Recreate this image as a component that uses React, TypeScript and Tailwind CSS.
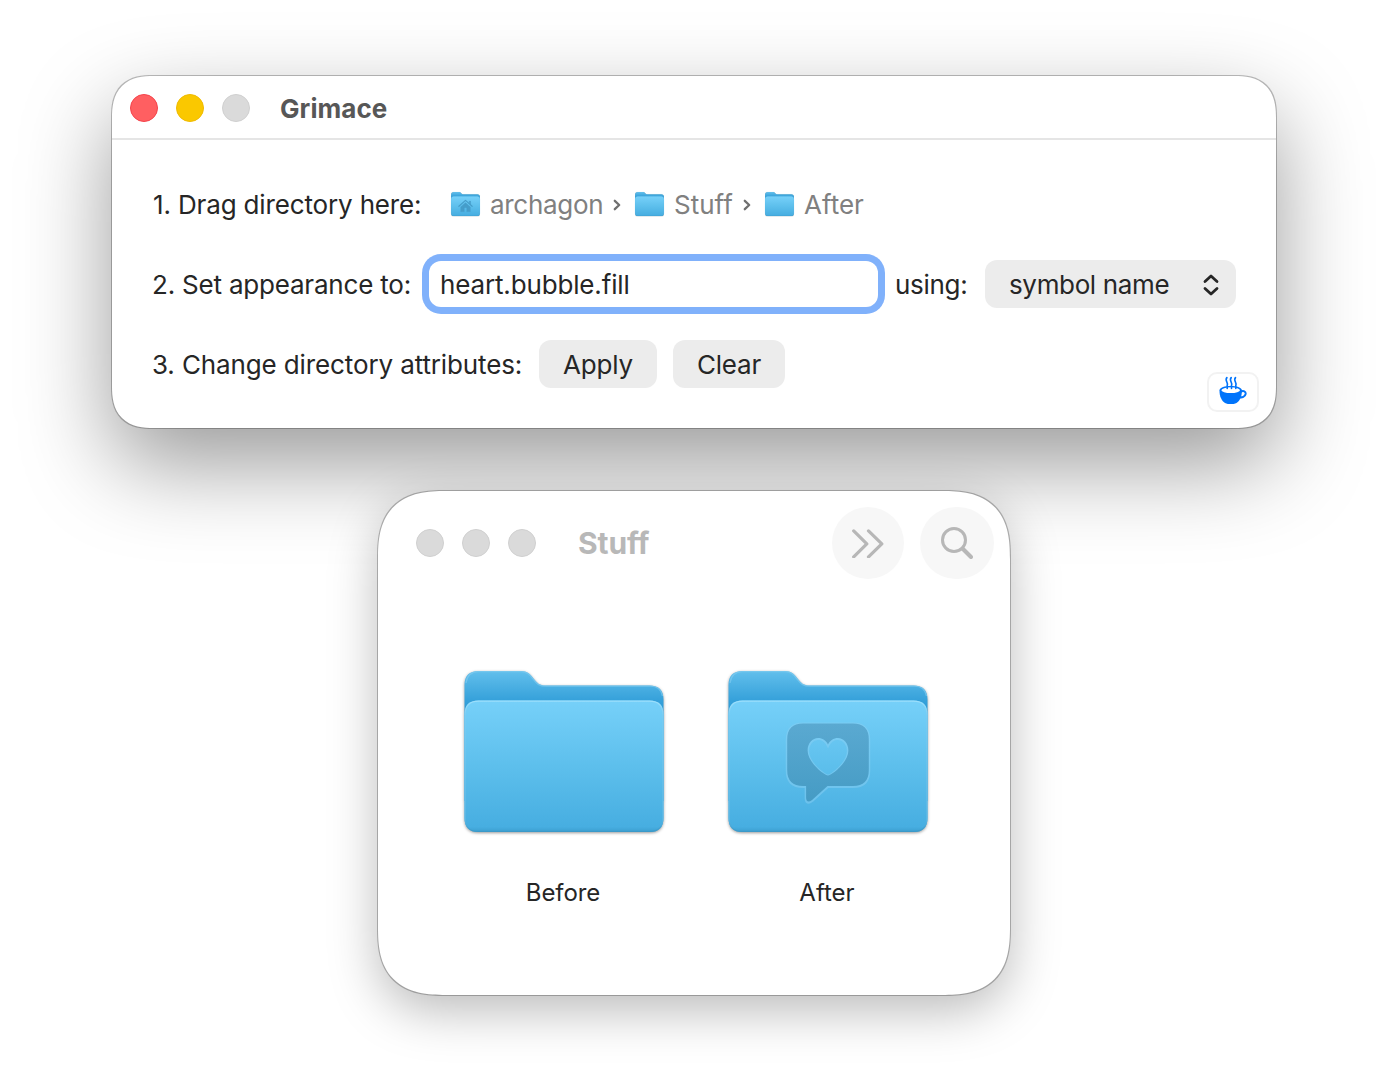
import { ReactNode } from "react";

function Light({ className }: { className: string }) {
  return <span className={`size-7 rounded-full border ${className}`} />;
}

function Folder({ id, className, radius = 14, children }: { id: string; className: string; radius?: number; children?: ReactNode }) {
  const r = radius;
  return (
    <svg viewBox="-0.5 0 201 161" preserveAspectRatio="none" className={`overflow-visible ${className}`}>
      <defs>
        <linearGradient id={`${id}-back`} x1="0" y1="0" x2="0" y2="42" gradientUnits="userSpaceOnUse">
          <stop offset="0" stopColor="#62bfec" />
          <stop offset="0.7" stopColor="#36a1da" />
          <stop offset="1" stopColor="#2b9ad6" />
        </linearGradient>
        <linearGradient id={`${id}-front`} x1="0" y1="30" x2="0" y2="161" gradientUnits="userSpaceOnUse">
          <stop offset="0" stopColor="#76d0f9" />
          <stop offset="0.5" stopColor="#5dbfec" />
          <stop offset="0.96" stopColor="#47aee1" />
          <stop offset="1" stopColor="#3c9fd0" />
        </linearGradient>
        <linearGradient id={`${id}-rim`} x1="0" y1="29" x2="0" y2="161" gradientUnits="userSpaceOnUse">
          <stop offset="0" stopColor="#9ee0fc" />
          <stop offset="0.12" stopColor="#7accf2" />
          <stop offset="0.9" stopColor="#5fb9e6" />
          <stop offset="1" stopColor="#3998c8" />
        </linearGradient>
      </defs>
      <g className="[filter:drop-shadow(0_1.5px_1.5px_rgba(0,0,0,0.4))]">
        <path
          d={`M0 130V${r}Q0 0 ${r} 0H57C63 0 66 3 69 7C73 12 75 14.5 82 14.5H${200 - r}Q200 14.5 200 ${14.5 + r}V130Z`}
          fill={`url(#${id}-back)`}
        />
        <path
          d={`M0 ${29.5 + r}Q0 29.500 ${r} 29.500H${200 - r}Q200 29.500 200 ${29.5 + r}V${161 - r}Q200 161 ${200 - r} 161H${r}Q0 161 0 ${161 - r}Z`}
          fill={`url(#${id}-front)`}
        />
      </g>
      <path d="M1.500 12Q3 1 14 .7H57C63 .7 66 3.700 68.500 7.700C72.500 12.700 75 15.200 82 15.200H187Q197 15.200 199 25" fill="none" stroke="#7dcbf0" strokeOpacity=".7" strokeWidth="1.300" />
      <path
        d={`M.6 ${29.5 + r}Q.6 30.100 ${r} 30.100H${200 - r}Q199.400 30.100 199.400 ${29.5 + r}V${161 - r}Q199.400 160.400 ${200 - r} 160.400H${r}Q.6 160.400 .6 ${161 - r}Z`}
        fill="none"
        stroke={`url(#${id}-rim)`}
        strokeWidth="1.200"
      />
      {children}
    </svg>
  );
}

function HeartBubble() {
  const shape =
    "M75 52.500H125Q141 52.500 141 68.500V99Q141 115 125 115H99.500L84 129Q78.500 133 78 127V115H75Q59 115 59 99V68.500Q59 52.500 75 52.500ZM100 104.500C97 104.500 79.500 92 79.500 79.500C79.500 72 84.500 67 90 67C94.500 67 98 69.500 100 73.500C102 69.500 105.500 67 110 67C115.500 67 120.500 72 120.500 79.500C120.500 92 103 104.500 100 104.500Z";
  return (
    <g>
      <defs>
        <linearGradient id="bubble" x1="0" y1="53" x2="0" y2="132" gradientUnits="userSpaceOnUse">
          <stop offset="0" stopColor="#5aa9d1" />
          <stop offset="1" stopColor="#459bc4" />
        </linearGradient>
      </defs>
      <path d={shape} fill="none" stroke="#8ad0f4" strokeOpacity="0.5" strokeWidth="3" transform="translate(0 0.6)" />
      <path d={shape} fillRule="evenodd" fill="url(#bubble)" />
    </g>
  );
}

function House() {
  return (
    <g fill="#459dca" stroke="#459dca" strokeLinecap="round" strokeLinejoin="round">
      <path d="M54 96L100 56L146 96" fill="none" strokeWidth="8" />
      <path d="M126 60H136V86L126 77Z" strokeWidth="1" />
      <path d="M100 71L134 100V132H108V106H92V132H66V100Z" fillRule="evenodd" strokeWidth="1" />
    </g>
  );
}

function Chevron() {
  return (
    <svg viewBox="0 0 8 12" className="ml-px mt-0.5 h-3 w-2 shrink-0" fill="none" stroke="#6f6f6f" strokeWidth="2.300" strokeLinecap="round" strokeLinejoin="round">
      <path d="M1.800 1.800L6.200 6L1.800 10.200" />
    </svg>
  );
}

function Coffee() {
  return (
    <svg viewBox="0 0 28 28" className="size-7" fill="none">
      <path d="M21.500 15.800C24.500 14 27 15.500 26.600 18C26.100 20.700 23 21.800 20.500 21.200" stroke="#0074fb" strokeWidth="2" />
      <path d="M.5 14.200C.5 8.500 22.900 8.500 22.900 14.200C22.900 20.500 21 24.500 17.500 27C14.500 28.700 9 28.700 6 27C2.400 24.500 .5 20.500 .5 14.200Z" fill="#0074fb" />
      <ellipse cx="11.700" cy="14.200" rx="9.300" ry="2.900" fill="#fff" />
      <g stroke="#0074fb" strokeWidth="1.600" strokeLinecap="round">
        <path d="M7.900 1.600C5.200 4.700 9.800 6.500 8.200 9.500V12.500" />
        <path d="M12.200 1.600C9.500 4.700 14.100 6.500 12.500 9.500V12.500" />
        <path d="M16.500 1.600C13.800 4.700 18.400 6.500 16.800 9.500V12.500" />
      </g>
    </svg>
  );
}

function Crumb({ id, label, width, children }: { id: string; label: string; width: string; children?: ReactNode }) {
  return (
    <span className="flex items-center gap-[10px]">
      <Folder id={id} radius={19} className="h-6 w-[29px]">{children}</Folder>
      <span className={`whitespace-nowrap pt-0.5 text-[#808080] ${width}`}>{label}</span>
    </span>
  );
}

export default function App() {
  return (
    <main className="flex h-[1075px] w-[1388px] flex-col items-center overflow-hidden bg-white pt-[76px] font-['Inter',sans-serif] text-[26px] leading-8 text-[#262626]">
      <section className="relative h-[352px] w-[1164px] shrink-0 rounded-[42px] bg-white shadow-[0_0_0_1px_rgba(0,0,0,0.25),0_36px_90px_rgba(0,0,0,0.4)] [corner-shape:superellipse(1.35)]">
        <header className="flex h-16 items-center gap-[18px] border-b-2 border-[#e5e5e5] pl-[18px] pt-0.5">
          <Light className="border-[#f5434b] bg-[#ff5f61]" />
          <Light className="border-[#f0bb00] bg-[#fac800]" />
          <Light className="border-[#d0d0d0] bg-[#dadada]" />
          <h1 className="ml-[12px] whitespace-nowrap pt-0.5 text-[26px] font-bold tracking-[0.05px] text-[#575757]">Grimace</h1>
        </header>

        <div className="flex flex-col gap-8 pl-[40px] pt-[40px]">
          <div className="flex h-12 items-center">
            <span className="w-[299px] whitespace-nowrap pl-px pt-0.5 tracking-[-0.15px]">1. Drag directory here:</span>
            <Crumb id="home" label="archagon" width="w-[122px] tracking-[-0.3px]"><House /></Crumb>
            <Chevron />
            <span className="w-[14px]" />
            <Crumb id="stuff" label="Stuff" width="w-[68px]" />
            <Chevron />
            <span className="w-[14px]" />
            <Crumb id="after" label="After" width="w-[60px]" />
          </div>

          <div className="flex h-12 items-center">
            <label className="w-[277px] whitespace-nowrap pt-0.5 tracking-[-0.2px]" htmlFor="symbol">2. Set appearance to:</label>
            <input
              id="symbol"
              defaultValue="heart.bubble.fill"
              className="h-[46px] w-[449px] rounded-[12px] bg-white pl-[11px] tracking-[-0.15px] shadow-[0_0_0_7px_#80b1fb] outline-none"
            />
            <span className="ml-[17px] w-[90px] whitespace-nowrap pt-0.5 tracking-[-0.3px]">using:</span>
            <button className="flex h-12 w-[251px] items-center justify-between rounded-[12px] bg-[#ececec] pl-6 pr-4">
              <span className="whitespace-nowrap pt-0.5 tracking-[-0.35px]">symbol name</span>
              <svg viewBox="0 0 18 22" className="mt-px h-[22px] w-[18px]" fill="none" stroke="#262626" strokeWidth="2.800" strokeLinecap="round" strokeLinejoin="round">
                <path d="M3 7.500L9 2L15 7.500M3 14.500L9 20L15 14.500" />
              </svg>
            </button>
          </div>

          <div className="flex h-12 items-center">
            <span className="w-[387px] whitespace-nowrap pt-0.5 tracking-[-0.12px]">3. Change directory attributes:</span>
            <button className="h-12 w-[118px] rounded-[12px] bg-[#ececec] pt-0.5 tracking-[-0.2px]">Apply</button>
            <button className="ml-4 h-12 w-[112px] rounded-[12px] bg-[#ececec] pt-0.5 tracking-[-0.2px]">Clear</button>
          </div>
        </div>

        <button className="absolute bottom-4 right-[17px] flex h-10 w-[52px] items-center justify-center rounded-[10px] border-2 border-[#f2f2f2] bg-white pb-1">
          <Coffee />
        </button>
      </section>

      <section className="relative mt-[63px] h-[504px] w-[632px] shrink-0 rounded-[68px] bg-white shadow-[0_0_0_1px_rgba(0,0,0,0.25),0_16px_50px_rgba(0,0,0,0.27)] [corner-shape:superellipse(1.4)]">
        <header className="flex h-[104px] items-center gap-[18px] pl-[38px]">
          <Light className="border-[#d0d0d0] bg-[#dadada]" />
          <Light className="border-[#d0d0d0] bg-[#dadada]" />
          <Light className="border-[#d0d0d0] bg-[#dadada]" />
          <h2 className="ml-6 w-[236px] whitespace-nowrap text-[30px] font-bold tracking-[-0.1px] text-[#b8b8b8]">Stuff</h2>
          <span className="flex size-[72px] items-center justify-center rounded-full bg-[#f7f7f7]">
            <svg viewBox="0 0 32 30" className="h-[30px] w-8" fill="none" stroke="#b7b7b7" strokeWidth="3.200" strokeLinecap="round" strokeLinejoin="round">
              <path d="M1.700 2.900L14.800 15.900L1.700 28.900M16.500 2.900L29.800 15.900L16.500 28.900" />
            </svg>
          </span>
          <span className="-ml-0.5 flex h-[72px] w-[74px] items-center justify-center rounded-full bg-[#f7f7f7]">
            <svg viewBox="0 0 32 32" className="size-8" fill="none" stroke="#b7b7b7" strokeWidth="3" strokeLinecap="round">
              <circle cx="13" cy="13" r="11.500" />
              <path d="M22 22L30 30" strokeWidth="4" />
            </svg>
          </span>
        </header>
        <div className="grid grid-cols-[200px_200px] gap-x-16 pl-[86px] pt-[76px] text-[24px]">
          <Folder id="before-big" className="h-[161px] w-[200px]" />
          <Folder id="after-big" className="h-[161px] w-[200px]"><HeartBubble /></Folder>
          <span className="mt-[45px] pr-[2px] text-center tracking-[-0.1px]">Before</span>
          <span className="mt-[45px] pr-[2px] text-center">After</span>
        </div>
      </section>
    </main>
  );
}
